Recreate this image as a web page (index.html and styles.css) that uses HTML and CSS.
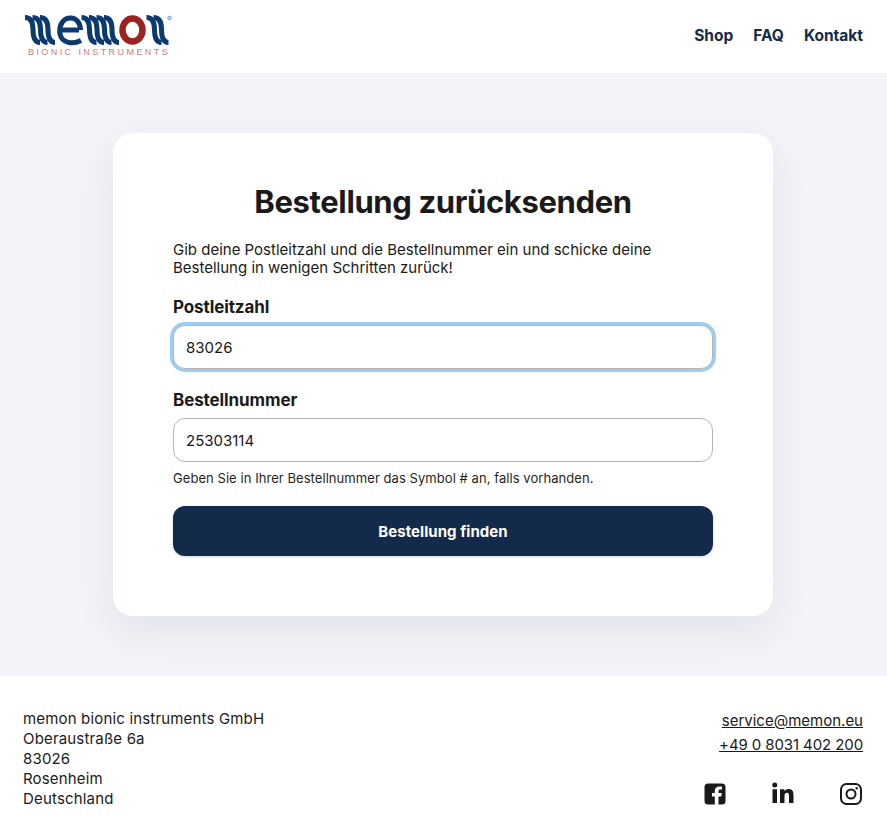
FILE: index.html
```html
<!DOCTYPE html>
<html lang="de">
<head>
<meta charset="utf-8">
<title>Bestellung zurücksenden</title>
<link rel="stylesheet" href="styles.css">
</head>
<body>
<header class="site-header">
  <a class="logo" href="#" aria-label="memon bionic instruments">
    <svg class="logo-mark" width="148" height="31" viewBox="0 0 148 31" aria-hidden="true">
      <defs>
        <path id="wave" d="M-1 2.500C4 2.500 7 6 7 14.500S9 27.500 14 27.500"/>
      </defs>
      <g fill="none" stroke="#0d3a6e" stroke-width="5">
        <use href="#wave" x="1"/>
        <use href="#wave" x="8.500"/>
        <use href="#wave" x="16"/>
        <path d="M37 15H54"/>
        <path d="M56 25.500C48 29.500 37 28.500 35 19C33.500 9 39 3 45.500 3C51.500 3 55.500 8 55.500 15"/>
        <use href="#wave" x="57.500"/>
        <use href="#wave" x="65"/>
        <use href="#wave" x="72.500"/>
        <use href="#wave" x="80"/>
        <use href="#wave" x="122.500"/>
        <use href="#wave" x="129.500"/>
      </g>
      <ellipse cx="107.500" cy="15" rx="10" ry="11.500" fill="none" stroke="#9b2423" stroke-width="6.500"/>
      <circle cx="144.500" cy="3" r="1.800" fill="#c8d6e4" stroke="#6f8fb0" stroke-width=".8"/>
    </svg>
    <span class="logo-sub">BIONIC INSTRUMENTS</span>
  </a>
  <nav class="nav">
    <a href="#">Shop</a>
    <a href="#">FAQ</a>
    <a href="#">Kontakt</a>
  </nav>
</header>
<main class="main">
  <section class="card">
    <h1>Bestellung zurücksenden</h1>
    <p class="intro">Gib deine Postleitzahl und die Bestellnummer ein und schicke deine Bestellung in wenigen Schritten zurück!</p>
    <form class="form">
      <div class="field">
        <label for="plz">Postleitzahl</label>
        <input class="input input-focus" id="plz" type="text" value="83026">
      </div>
      <div class="field">
        <label for="nr">Bestellnummer</label>
        <input class="input" id="nr" type="text" value="25303114">
        <p class="hint">Geben Sie in Ihrer Bestellnummer das Symbol # an, falls vorhanden.</p>
      </div>
      <button class="btn" type="button">Bestellung finden</button>
    </form>
  </section>
</main>
<footer class="footer">
  <address class="address">
    <span>memon bionic instruments GmbH</span>
    <span>Oberaustraße 6a</span>
    <span>83026</span>
    <span>Rosenheim</span>
    <span>Deutschland</span>
  </address>
  <div class="contact">
    <a href="#">service@memon.eu</a>
    <a class="phone" href="#">+49 0 8031 402 200</a>
    <div class="social">
      <svg width="22" height="22" viewBox="0 0 22 22" aria-label="Facebook"><path fill="#1a1a1a" fill-rule="evenodd" d="M4 0.500H18A3.500 3.500 0 0 1 21.500 4V18A3.500 3.500 0 0 1 18 21.500H14.500V13.500H17.300L17.800 10H14.500V8.200C14.500 7.200 15 6.600 16 6.600H18V3.600C17.200 3.500 16.300 3.400 15.300 3.400C12.700 3.400 10.800 5 10.800 7.800V10H8V13.500H10.800V21.500H4A3.500 3.500 0 0 1 .5 18V4A3.500 3.500 0 0 1 4 .5Z"/></svg>
      <svg class="icon-in" width="22" height="22" viewBox="0 0 22 22" aria-label="LinkedIn"><path fill="#1a1a1a" d="M.5 7.300H5V21H.5ZM2.750.5A2.500 2.500 0 1 1 2.750 5.500A2.500 2.500 0 0 1 2.750.5ZM8 7.300H12.300V9.200C13 8 14.500 7 16.500 7C20.500 7 21.500 9.500 21.500 13.200V21H17V14C17 12.300 16.800 10.800 15 10.800C13.200 10.800 12.500 12.100 12.500 14V21H8Z"/></svg>
      <svg width="22" height="22" viewBox="0 0 22 22" aria-label="Instagram" fill="none" stroke="#1a1a1a" stroke-width="2"><rect x="1" y="1" width="20" height="20" rx="5.500"/><circle cx="11" cy="11" r="4.500"/><circle cx="16.700" cy="5.300" r="1.200" fill="#1a1a1a" stroke="none"/></svg>
    </div>
  </div>
</footer>
</body>
</html>
```
FILE: styles.css
```css
* { box-sizing: border-box; }
html, body { margin: 0; padding: 0; }
body {
  width: 887px;
  height: 822px;
  overflow: hidden;
  background: #f3f4f9;
  color: #1a1a1a;
  font-family: Inter, "Liberation Sans", sans-serif;
  font-size: 15px;
}
a { color: inherit; }
.site-header {
  height: 73px;
  background: #fff;
  display: flex;
  align-items: center;
  justify-content: space-between;
  padding: 0 24px 0 25px;
}
.logo {
  display: flex;
  flex-direction: column;
  text-decoration: none;
  margin-bottom: 1px;
}
.logo-mark { display: block; }
.logo-sub {
  font-family: "Liberation Sans", sans-serif;
  font-size: 9px;
  line-height: 9px;
  letter-spacing: 2.420px;
  color: #cf7a7d;
  margin-left: 3px;
  margin-top: 2px;
  white-space: nowrap;
}
.nav { display: flex; gap: 20px; margin-bottom: 3px; }
.nav a {
  color: #142a4a;
  font-weight: 700;
  font-size: 15.500px;
  text-decoration: none;
}
.main {
  height: 603px;
  padding: 60px 1px 0 0;
  display: flex;
  justify-content: center;
  align-items: flex-start;
}
.card {
  width: 660px;
  height: 483px;
  background: #fff;
  border-radius: 20px;
  padding: 48px 60px 0;
  box-shadow: 0 15px 40px rgba(20, 42, 74, .08);
}
h1 {
  margin: 0;
  font-size: 31px;
  line-height: 42px;
  font-weight: 700;
  text-align: center;
  letter-spacing: -.37px;
}
.intro {
  margin: 18px 0 0;
  font-size: 15px;
  line-height: 18px;
}
.form { display: flex; flex-direction: column; margin-top: 19px; }
.field { display: flex; flex-direction: column; }
.field + .field { margin-top: 20px; }
label {
  font-size: 17px;
  line-height: 22px;
  font-weight: 700;
  letter-spacing: -.1px;
  margin-bottom: 7px;
}
.input {
  width: 100%;
  height: 44px;
  border: 1px solid #b5b5b5;
  border-radius: 12px;
  padding: 0 12px;
  font: 400 15px Inter, "Liberation Sans", sans-serif;
  color: #1a1a1a;
  background: #fff;
  outline: none;
}
.input-focus { box-shadow: 0 0 0 3px #9bcdf5; }
.hint {
  margin: 7px 0 0;
  font-size: 13px;
  line-height: 18px;
  letter-spacing: .06px;
  color: #1f1f1f;
}
.btn {
  margin-top: 19px;
  height: 50px;
  border: 0;
  border-radius: 12px;
  background: #142a4a;
  color: #fff;
  font: 700 15px Inter, "Liberation Sans", sans-serif;
  letter-spacing: .05px;
  box-shadow: 0 1px 3px rgba(20, 42, 74, .2);
}
.footer {
  height: 146px;
  background: #fff;
  display: flex;
  justify-content: space-between;
  padding: 33px 24px 0 23px;
}
.address {
  font-style: normal;
  font-size: 15px;
  line-height: 20px;
  letter-spacing: .17px;
  display: flex;
  flex-direction: column;
}
.contact {
  display: flex;
  flex-direction: column;
  align-items: flex-end;
  gap: 4px;
  font-size: 15px;
  line-height: 20px;
  padding-top: 2px;
}
.phone { letter-spacing: -.1px; }
.social {
  display: flex;
  gap: 46px;
  margin: 24px 1px 0 0;
}
.icon-in { margin-top: -1px; }
```
